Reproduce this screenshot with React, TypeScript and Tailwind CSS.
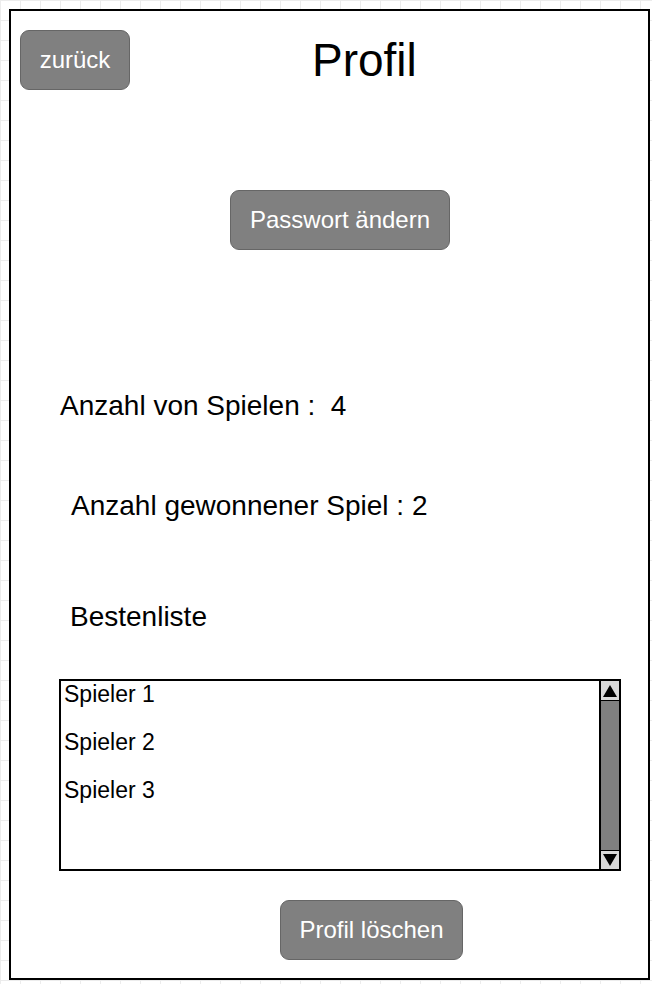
const players = ["Spieler 1", "Spieler 2", "Spieler 3"];

function GrayButton({ label, className }: { label: string; className: string }) {
  return (
    <button
      className={`flex items-center justify-center rounded-[9px] border border-[#666666] bg-[#808080] text-[24px] leading-none text-white ${className}`}
    >
      {label}
    </button>
  );
}

function Arrow({ up }: { up?: boolean }) {
  return (
    <svg width="16" height="14" viewBox="0 0 16 14">
      {up ? <polygon points="8,1 15,13 1,13" fill="#000" /> : <polygon points="1,1 15,1 8,13" fill="#000" />}
    </svg>
  );
}

export default function App() {
  return (
    <div
      className="min-h-screen w-full bg-white bg-[linear-gradient(to_right,#ececec_1px,transparent_1px),linear-gradient(to_bottom,#ececec_1px,transparent_1px)] bg-[size:20px_20px] pl-[9px] pt-[9px] text-black"
      style={{ fontFamily: '"Liberation Sans", Arial, Helvetica, sans-serif' }}
    >
      <div className="flex h-[971px] w-[641px] flex-col border-2 border-black bg-white">
        {/* header */}
        <div className="mt-[19px] flex items-center pl-[9px]">
          <GrayButton label="zurück" className="h-[60px] w-[110px]" />
          <h1 className="ml-[182px] text-[46px] leading-[46px]">Profil</h1>
        </div>

        <GrayButton label="Passwort ändern" className="ml-[219px] mt-[100px] h-[60px] w-[220px]" />

        <p className="ml-[49px] mt-[140px] text-[28px] leading-[32px]">Anzahl von Spielen :&nbsp; 4</p>
        <p className="ml-[60px] mt-[68px] text-[28px] leading-[32px]">Anzahl gewonnener Spiel : 2</p>
        <p className="ml-[59px] mt-[79px] text-[28px] leading-[32px]">Bestenliste</p>

        {/* Bestenliste box */}
        <div className="ml-[48px] mt-[46px] flex h-[192px] w-[562px] border-2 border-black">
          <div className="flex flex-1 flex-col gap-[22px] pl-[3px] text-[23px] leading-[26px]">
            {players.map((p) => (
              <div key={p}>{p}</div>
            ))}
          </div>
          <div className="flex w-[20px] flex-col border-l-2 border-black">
            <div className="flex h-[19px] items-center justify-center bg-[#d9d9d9]">
              <Arrow up />
            </div>
            <div className="flex-1 border-y border-black bg-[#808080]" />
            <div className="flex h-[18px] items-center justify-center bg-[#d9d9d9]">
              <Arrow />
            </div>
          </div>
        </div>

        <GrayButton label="Profil löschen" className="ml-[269px] mt-[29px] h-[60px] w-[183px]" />
      </div>
    </div>
  );
}
